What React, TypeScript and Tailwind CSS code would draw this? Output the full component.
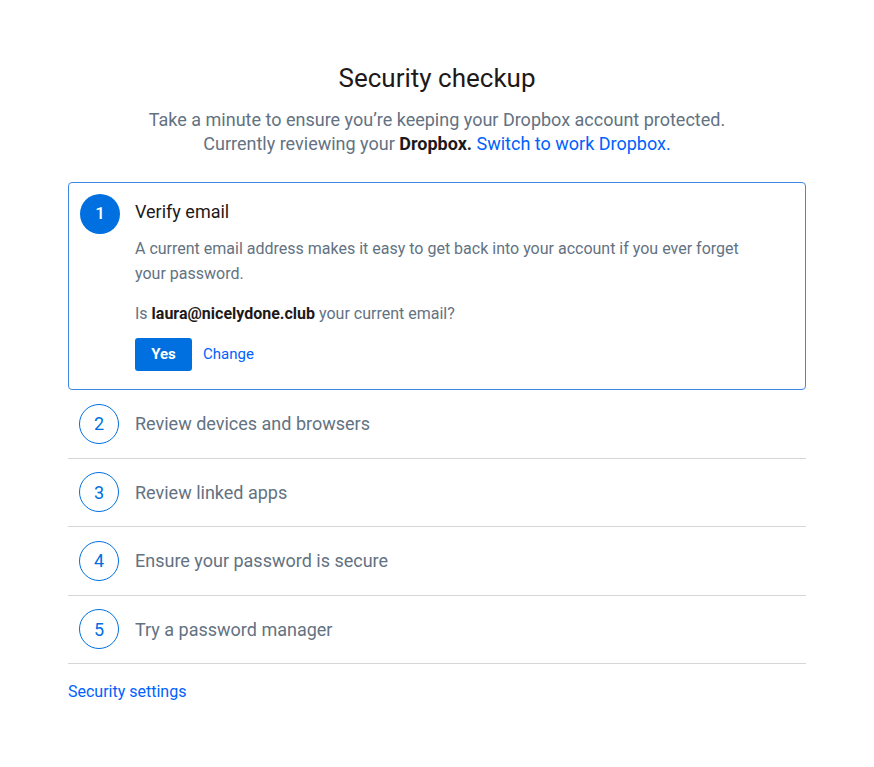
const steps = [
  "Review devices and browsers",
  "Review linked apps",
  "Ensure your password is secure",
  "Try a password manager",
]

export default function App() {
  return (
    <div className="min-h-screen bg-white font-['Roboto',sans-serif] text-[#1e1919]">
      <div className="mx-auto w-[738px] pt-[60px]">
        <h1 className="text-center text-[26px] leading-[36px] font-normal">Security checkup</h1>
        <p className="mt-[12px] text-center text-[18px] leading-[24px] text-[#637282]">
          Take a minute to ensure you’re keeping your Dropbox account protected.
          <br />
          Currently reviewing your <span className="font-bold text-[#1e1919]">Dropbox.</span>{" "}
          <a className="text-[#0061fe]">Switch to work Dropbox.</a>
        </p>

        <div className="mt-[26px] flex gap-[15px] rounded-[4px] border border-[#3d8ae6] px-[11px] pt-[11px] pb-[18px]">
          <div className="flex h-10 w-10 shrink-0 items-center justify-center rounded-full bg-[#0070e0] text-[17px] font-medium text-white">
            1
          </div>
          <div className="pt-[6px]">
            <h2 className="text-[18px] leading-[24px]">Verify email</h2>
            <p className="mt-[12px] max-w-[610px] text-[16px] leading-[25px] text-[#637282]">
              A current email address makes it easy to get back into your account if you ever forget your password.
            </p>
            <p className="mt-[15px] text-[16px] leading-[25px] text-[#637282]">
              Is <span className="font-bold text-[#1e1919]">laura@nicelydone.club</span> your current email?
            </p>
            <div className="mt-[12px] flex items-center gap-[11px]">
              <button className="h-[33px] w-[57px] rounded-[3px] bg-[#0070e0] text-[15px] font-bold text-white">
                Yes
              </button>
              <a className="text-[15px] text-[#0061fe]">Change</a>
            </div>
          </div>
        </div>

        {steps.map((s, i) => (
          <div key={s} className="flex h-[68.5px] items-center gap-4 border-b border-[#d6d6d6] pl-[11px]">
            <div className="flex h-10 w-10 shrink-0 items-center justify-center rounded-full border border-[#0070e0] text-[18px] text-[#0070e0]">
              {i + 2}
            </div>
            <span className="text-[18px] text-[#637282]">{s}</span>
          </div>
        ))}

        <a className="mt-[16px] block text-[16px] text-[#0061fe]">Security settings</a>
      </div>
    </div>
  )
}
